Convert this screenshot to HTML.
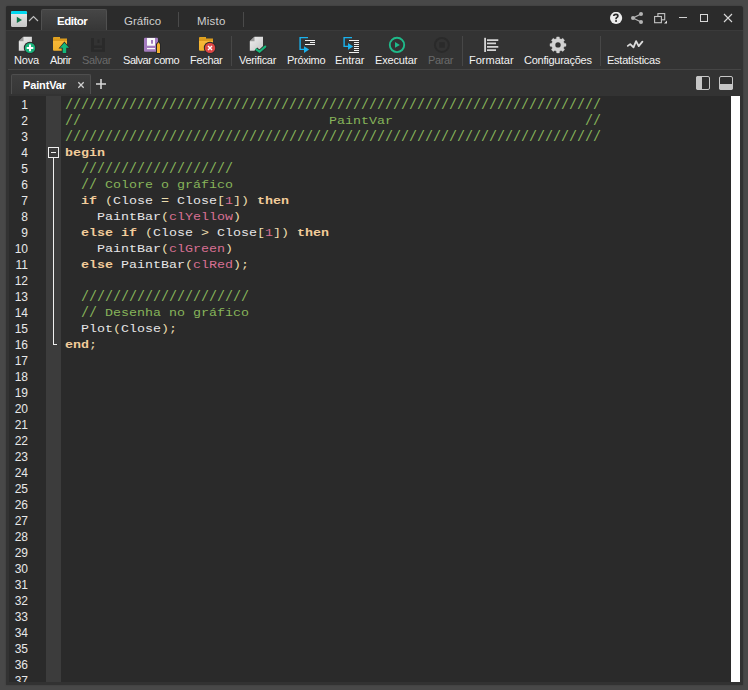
<!DOCTYPE html>
<html><head><meta charset="utf-8">
<style>
*{margin:0;padding:0;box-sizing:border-box}
html,body{width:748px;height:690px;overflow:hidden;background:#484848;font-family:"Liberation Sans",sans-serif}
.abs{position:absolute}
#win{position:absolute;left:6px;top:6px;width:737px;height:679px;background:#323232;border-radius:2px 3px 0 0;overflow:hidden;box-shadow:0 0 2px 0 rgba(0,0,0,0.25)}
#title{position:absolute;left:0;top:0;width:737px;height:24px;background:#2b2b2b}
#tool{position:absolute;left:0;top:24px;width:737px;height:66px;background:#333}
.lbl{position:absolute;top:24px;font-size:11px;letter-spacing:-0.3px;color:#f2f2f2;white-space:nowrap;line-height:13px}
.dis{color:#6a6a6a}
.sep{position:absolute;top:6px;width:1px;height:30px;background:#474747}
.tabt{position:absolute;font-size:11.5px;color:#cfcfcf;white-space:nowrap;line-height:14px}
#code{position:absolute;left:59px;top:91px;font-family:"Liberation Mono",monospace;font-size:13.333px;line-height:16px;white-space:pre;color:#e6e6e6}
.sc{display:inline-block;transform:scaleY(0.87);transform-origin:0 12px}
.sl{display:inline-block;transform:scaleY(1.06);transform-origin:0 2px}
.c{color:#87b55a}
.k{color:#f2cc9a;font-weight:bold}
.n{color:#d87093}
.p{color:#eadcae}
#nums{position:absolute;left:2px;top:91px;width:20px;height:585px;overflow:hidden;font-size:12px;line-height:16px;color:#e8e8e8;text-align:right}
</style></head><body>
<div id="win">
  <div id="title">
    <!-- app icon -->
    <svg class="abs" style="left:5px;top:5px" width="17" height="17" viewBox="0 0 17 17">
      <defs><linearGradient id="gi" x1="0" y1="0" x2="0" y2="1"><stop offset="0" stop-color="#ececec"/><stop offset="1" stop-color="#c4c4c4"/></linearGradient></defs>
      <rect x="0" y="0" width="16" height="16" rx="1.5" fill="url(#gi)"/>
      <path d="M0 1.5 Q0 0 1.5 0 H14.5 Q16 0 16 1.5 V3 H0Z" fill="#00d8f0"/>
      <path d="M5.8 5.8 L11 8.9 L5.8 12Z" fill="#0b7045"/>
    </svg>
    <svg class="abs" style="left:22px;top:9px" width="11" height="7" viewBox="0 0 11 7"><path d="M1 6 L5.5 1.5 L10 6" stroke="#bdbdbd" stroke-width="1.2" fill="none"/></svg>
    <!-- active tab -->
    <div class="abs" style="left:35px;top:3px;width:66px;height:22px;border:1px solid #505050;border-bottom:none;border-radius:2px 2px 0 0;background:linear-gradient(#464646,#363636)"></div>
    <div class="tabt" style="left:51px;top:8px;color:#fff;font-weight:bold;letter-spacing:-0.5px">Editor</div>
    <div class="tabt" style="left:118px;top:8px">Gráfico</div>
    <div class="abs" style="left:172px;top:6px;width:1px;height:15px;background:#4a4a4a"></div>
    <div class="tabt" style="left:191px;top:8px;letter-spacing:0.2px">Misto</div>
    <div class="abs" style="left:237px;top:6px;width:1px;height:15px;background:#4a4a4a"></div>
    <!-- window controls -->
    <svg class="abs" style="left:604px;top:6px" width="130" height="13" viewBox="0 0 130 13">
      <circle cx="6.1" cy="5.95" r="6.1" fill="#ececec"/>
      <path d="M3.7 4 Q3.9 2.3 6 2.3 Q7.9 2.3 7.9 3.9 Q7.9 4.9 6.8 5.4 Q6 5.8 6 7.2" stroke="#262626" stroke-width="1.7" fill="none"/><circle cx="6.05" cy="9.1" r="1" fill="#262626"/>
      <g stroke="#b4b4b4" stroke-width="1.3" fill="#b4b4b4">
        <line x1="23" y1="6" x2="31" y2="2"/><line x1="23" y1="6" x2="31" y2="10"/>
        <circle cx="23" cy="6" r="2" stroke="none"/><circle cx="31" cy="2" r="2" stroke="none"/><circle cx="31" cy="10" r="2" stroke="none"/>
      </g>
      <g stroke="#c4c4c4" stroke-width="1.1" fill="none">
        <rect x="47.9" y="1.6" width="6.8" height="6.2"/>
        <rect x="44.6" y="4.5" width="6.8" height="6.2" fill="#2b2b2b"/>
      </g>
      <path d="M57 11.5 L54 11.5 L57 8.5Z" fill="#e0e0e0"/>
      <line x1="69" y1="5.5" x2="77" y2="5.5" stroke="#d0d0d0" stroke-width="1.1"/>
      <rect x="90.5" y="2.5" width="7" height="7" stroke="#d8d8d8" stroke-width="1" fill="none"/>
      <path d="M114 2 L122 10 M122 2 L114 10" stroke="#d8d8d8" stroke-width="1.1"/>
    </svg>
  </div>
  <div id="tool">
    <div class="abs" style="left:0;top:0;width:737px;height:1px;background:#3a3a3a"></div>
    <div class="lbl" style="left:8px;letter-spacing:-0.15px">Nova</div>
    <div class="lbl" style="left:44px;letter-spacing:-0.45px">Abrir</div>
    <div class="lbl dis" style="left:76px;letter-spacing:-0.35px">Salvar</div>
    <div class="lbl" style="left:117px;letter-spacing:-0.45px">Salvar como</div>
    <div class="lbl" style="left:184px;letter-spacing:-0.3px">Fechar</div>
    <div class="sep" style="left:225px"></div>
    <div class="lbl" style="left:233px;letter-spacing:-0.3px">Verificar</div>
    <div class="lbl" style="left:281px;letter-spacing:-0.3px">Próximo</div>
    <div class="lbl" style="left:329px;letter-spacing:-0.1px">Entrar</div>
    <div class="lbl" style="left:369px;letter-spacing:-0.15px">Executar</div>
    <div class="lbl dis" style="left:422px;letter-spacing:-0.4px">Parar</div>
    <div class="sep" style="left:456px"></div>
    <div class="lbl" style="left:463px;letter-spacing:0px">Formatar</div>
    <div class="lbl" style="left:518px;letter-spacing:-0.25px">Configurações</div>
    <div class="sep" style="left:594px"></div>
    <div class="lbl" style="left:601px;letter-spacing:-0.25px">Estatísticas</div>
    <!-- bottom separator -->
    <div class="abs" style="left:2px;top:39px;width:733px;height:1px;background:#454545"></div>
    <!-- editor tab -->
    <div class="abs" style="left:5px;top:44px;width:80px;height:20px;border:1px solid #4e4e4e;border-bottom:none;border-radius:2px 2px 0 0;background:linear-gradient(#3e3e3e,#363636)"></div>
    <div class="abs" style="left:17px;top:49px;font-size:11px;font-weight:bold;color:#fff;letter-spacing:-0.15px;line-height:13px">PaintVar</div>
    <svg class="abs" style="left:71px;top:51px" width="8" height="8" viewBox="0 0 8 8"><path d="M1.3 1.3 L6.7 6.7 M6.7 1.3 L1.3 6.7" stroke="#cfcfcf" stroke-width="1.3"/></svg>
    <svg class="abs" style="left:90px;top:49px" width="10" height="10" viewBox="0 0 10 10"><path d="M5 0 V10 M0 5 H10" stroke="#d8d8d8" stroke-width="1.6"/></svg>
    <!-- layout icons -->
    <svg class="abs" style="left:690px;top:46px" width="40" height="14" viewBox="0 0 40 14">
      <rect x="0.5" y="0.5" width="13" height="13" rx="1.5" fill="#2e2e2e" stroke="#c6c6c6" stroke-width="1"/>
      <path d="M2 0 H6 V14 H2 Q0 14 0 12 V2 Q0 0 2 0Z" fill="#c6c6c6"/>
      <rect x="23.5" y="0.5" width="13" height="13" rx="1.5" fill="#2e2e2e" stroke="#c6c6c6" stroke-width="1"/>
      <path d="M23 8 H37 V12 Q37 14 35 14 H25 Q23 14 23 12Z" fill="#c6c6c6"/>
    </svg>
  </div>
  <!-- editor -->
  <div class="abs" style="left:3px;top:90px;width:37px;height:586px;background:#2a2a2a"></div>
  <div class="abs" style="left:40px;top:90px;width:15px;height:586px;background:#3c3c3c"></div>
  <div class="abs" style="left:55px;top:90px;width:670px;height:586px;background:#2a2a2a"></div>
  <div class="abs" style="left:725px;top:90px;width:9px;height:586px;background:#fff"></div>
  <div id="nums">1<br>2<br>3<br>4<br>5<br>6<br>7<br>8<br>9<br>10<br>11<br>12<br>13<br>14<br>15<br>16<br>17<br>18<br>19<br>20<br>21<br>22<br>23<br>24<br>25<br>26<br>27<br>28<br>29<br>30<br>31<br>32<br>33<br>34<br>35<br>36<br>37<br></div>
  <!-- fold markers -->
  <svg class="abs" style="left:40px;top:140px" width="15" height="200" viewBox="0 0 15 200">
    <rect x="2.5" y="1.5" width="10" height="10" fill="none" stroke="#f0f0f0" stroke-width="1"/>
    <line x1="5" y1="6.5" x2="10" y2="6.5" stroke="#f0f0f0" stroke-width="1"/>
    <line x1="7.5" y1="12" x2="7.5" y2="198.5" stroke="#f0f0f0" stroke-width="1"/>
    <line x1="7" y1="198.5" x2="11" y2="198.5" stroke="#f0f0f0" stroke-width="1"/>
  </svg>
<div id="code"><span class="c sl">///////////////////////////////////////////////////////////////////</span>
<span class="c sl">//</span>                               <span class="c sc">PaintVar</span>                        <span class="c sl">//</span>
<span class="c sl">///////////////////////////////////////////////////////////////////</span>
<span class="k sc">begin</span>
  <span class="c sl">///////////////////</span>
  <span class="c sl">//</span> <span class="c sc">Colore</span> <span class="c sc">o</span> <span class="c sc">gráfico</span>
  <span class="k sc">if</span> <span class="p sc">(</span><span class="t sc">Close</span> <span class="p sc">=</span> <span class="t sc">Close</span><span class="p sc">[</span><span class="n sc">1</span><span class="p sc">])</span> <span class="k sc">then</span>
    <span class="t sc">PaintBar</span><span class="p sc">(</span><span class="n sc">clYellow</span><span class="p sc">)</span>
  <span class="k sc">else</span> <span class="k sc">if</span> <span class="p sc">(</span><span class="t sc">Close</span> <span class="p sc">&gt;</span> <span class="t sc">Close</span><span class="p sc">[</span><span class="n sc">1</span><span class="p sc">])</span> <span class="k sc">then</span>
    <span class="t sc">PaintBar</span><span class="p sc">(</span><span class="n sc">clGreen</span><span class="p sc">)</span>
  <span class="k sc">else</span> <span class="t sc">PaintBar</span><span class="p sc">(</span><span class="n sc">clRed</span><span class="p sc">);</span>

  <span class="c sl">/////////////////////</span>
  <span class="c sl">//</span> <span class="c sc">Desenha</span> <span class="c sc">no</span> <span class="c sc">gráfico</span>
  <span class="t sc">Plot</span><span class="p sc">(</span><span class="t sc">Close</span><span class="p sc">);</span>
<span class="k sc">end</span><span class="p sc">;</span></div>
</div>
<svg class="abs" style="left:0;top:0" width="748" height="70" viewBox="0 0 748 70">
<defs>
<linearGradient id="gdoc" x1="0" y1="0" x2="1" y2="1"><stop offset="0" stop-color="#f0f0f0"/><stop offset="1" stop-color="#c6c6c6"/></linearGradient>
<linearGradient id="gfold" x1="0" y1="0" x2="0" y2="1"><stop offset="0" stop-color="#e2a521"/><stop offset="0.25" stop-color="#d8961a"/><stop offset="0.3" stop-color="#f7b838"/><stop offset="1" stop-color="#f0b02a"/></linearGradient>
</defs>
<!-- Nova -->
<path d="M23.5 36.7 H31.9 V50.7 H18.8 V41.2Z" fill="url(#gdoc)"/>
<path d="M18.8 41.2 L23.5 36.7 V41.2Z" fill="#9a9a9a"/>
<circle cx="30" cy="47.9" r="6.2" fill="#2b2b2b"/>
<circle cx="30" cy="47.9" r="5.2" fill="#18b27a"/>
<path d="M30 44.6 V51.2 M26.7 47.9 H33.3" stroke="#fff" stroke-width="2"/>
<!-- Abrir -->
<path d="M53 38 Q53 37 54 37 H60 V38.5 H67 V50.7 H54 Q53 50.7 53 49.7Z" fill="url(#gfold)"/>
<path d="M64.4 41.4 L70.4 48.6 H67.2 V53.5 H61.7 V48.6 H58.5Z" fill="#2b2b2b"/>
<path d="M64.4 42.7 L69 47.7 H66.2 V52.9 H62.7 V47.7 H59.9Z" fill="#14b97a"/>
<!-- Salvar disabled -->
<path d="M91 38 H105 V51.7 H91Z M94 38 V45.5 H102 V38Z M94 48 V49.5 H102 V48Z" fill="#2a2a2a" fill-rule="evenodd"/>
<rect x="97.5" y="39.5" width="2" height="3.5" fill="#2a2a2a"/>
<!-- Salvar como -->
<path d="M145 37.8 H157 Q158 37.8 158 38.8 V51.7 H145 Q144 51.7 144 50.7 V38.8 Q144 37.8 145 37.8Z" fill="#a47bbf"/>
<rect x="147" y="38" width="8" height="7.7" fill="#fafafa"/>
<rect x="151" y="40" width="2" height="3.7" fill="#a47bbf"/>
<rect x="147" y="48" width="8" height="1.2" fill="#fafafa"/>
<path d="M156 44 L158.5 41 L161 44 V54 H156Z" fill="#262626"/>
<path d="M157 44.3 L158.5 42.3 L160 44.3 V53 H157Z" fill="#f4b02c"/>
<!-- Fechar -->
<path d="M199 38 Q199 37 200 37 H206 V38.5 H213 V50.7 H200 Q199 50.7 199 49.7Z" fill="url(#gfold)"/>
<circle cx="210" cy="47.9" r="6.2" fill="#2b2b2b"/>
<circle cx="210" cy="47.9" r="5.2" fill="#dc4646"/>
<path d="M208 45.9 L212 49.9 M212 45.9 L208 49.9" stroke="#fff" stroke-width="1.4"/>
<!-- Verificar -->
<path d="M254.5 36.8 H263 V50.7 H249.8 V41.3Z" fill="url(#gdoc)"/>
<path d="M249.8 41.3 L254.5 36.8 V41.3Z" fill="#9a9a9a"/>
<path d="M255.8 49.1 L259.5 52.2 L265.8 46.2" stroke="#2b2b2b" stroke-width="4.2" fill="none"/>
<path d="M256.3 49.4 L259.5 51.7 L265.2 46.6" stroke="#18b77a" stroke-width="2.2" fill="none" stroke-linecap="round"/>
<!-- Proximo -->
<path d="M308 37.6 H300.1 V49.4 H304.5" stroke="#1ab2ee" stroke-width="1.4" fill="none"/>
<path d="M304 46.2 L309.2 49.5 L304 52.9Z" fill="#1ab2ee"/>
<path d="M305 40.5 H315 M310 42.5 H315 M305 44.5 H315" stroke="#f0f0f0" stroke-width="1.1"/>
<!-- Entrar -->
<path d="M352 37.6 H344.1 V46.4 H348.5" stroke="#1ab2ee" stroke-width="1.4" fill="none"/>
<path d="M348 43 L353.2 46.4 L348 49.7Z" fill="#1ab2ee"/>
<path d="M349 40.5 H359 M354 42.5 H359 M354 44.5 H359 M354 46.5 H359 M354 48.5 H359 M354 50.5 H359 M349 52.5 H359" stroke="#f0f0f0" stroke-width="1.1"/>
<!-- Executar -->
<circle cx="397" cy="44.9" r="7.2" stroke="#1fba8a" stroke-width="1.9" fill="none"/>
<path d="M395 42 L399.9 44.9 L395 47.8Z" fill="#1fba8a"/>
<!-- Parar -->
<circle cx="441.9" cy="44.9" r="7" stroke="#2a2a2a" stroke-width="2" fill="none"/>
<rect x="439.3" y="42.2" width="5.5" height="5.5" fill="#2a2a2a"/>
<!-- Formatar -->
<rect x="484.2" y="37.8" width="1.8" height="14.2" fill="#d4d4d4"/>
<path d="M487 40.2 H498.3 M487 43.4 H496 M487 46.9 H498.3 M487 50.2 H496" stroke="#d4d4d4" stroke-width="1.7"/>
<!-- Configuracoes -->
<path d="M556.73 36.90 L559.27 36.90 L559.64 38.71 L561.21 39.37 L562.76 38.35 L564.55 40.14 L563.53 41.69 L564.19 43.26 L566.00 43.63 L566.00 46.17 L564.19 46.54 L563.53 48.11 L564.55 49.66 L562.76 51.45 L561.21 50.43 L559.64 51.09 L559.27 52.90 L556.73 52.90 L556.36 51.09 L554.79 50.43 L553.24 51.45 L551.45 49.66 L552.47 48.11 L551.81 46.54 L550.00 46.17 L550.00 43.63 L551.81 43.26 L552.47 41.69 L551.45 40.14 L553.24 38.35 L554.79 39.37 L556.36 38.71Z" fill="#d2d2d2" stroke="#d2d2d2" stroke-width="0.4" stroke-linejoin="round"/>
<circle cx="558" cy="44.9" r="2.7" fill="#333"/>
<!-- Estatisticas -->
<path d="M627.8 45.9 L630.2 44.1 L633.5 47.4 L636.1 41.1 L638.7 46.1 L642.4 41.6" stroke="#dcdcdc" stroke-width="1.8" fill="none" stroke-linejoin="round" stroke-linecap="round"/>
</svg>
</body></html>
